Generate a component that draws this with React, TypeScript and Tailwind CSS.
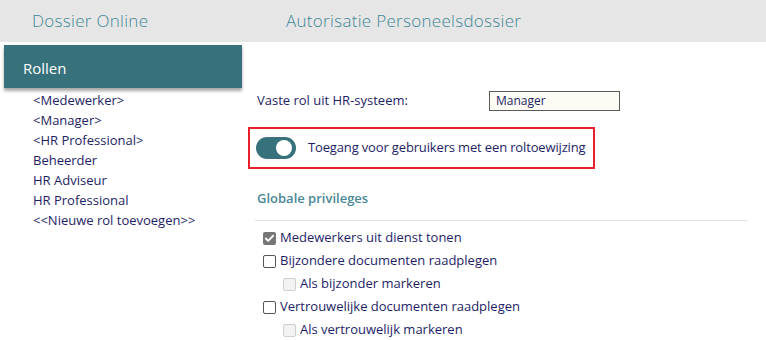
import { Check } from "lucide-react";

const roles = [
  "<Medewerker>",
  "<Manager>",
  "<HR Professional>",
  "Beheerder",
  "HR Adviseur",
  "HR Professional",
  "<<Nieuwe rol toevoegen>>",
];

const privileges = [
  { label: "Medewerkers uit dienst tonen", checked: true, nested: false },
  { label: "Bijzondere documenten raadplegen", checked: false, nested: false },
  { label: "Als bijzonder markeren", checked: false, nested: true },
  { label: "Vertrouwelijke documenten raadplegen", checked: false, nested: false },
  { label: "Als vertrouwelijk markeren", checked: false, nested: true },
];

const Box = ({ checked, disabled }: { checked: boolean; disabled: boolean }) => {
  if (checked) {
    return (
      <span className="flex h-[13px] w-[13px] items-center justify-center rounded-[2px] bg-[#767676]">
        <Check className="h-[11px] w-[11px] text-white" strokeWidth={4} />
      </span>
    );
  }
  return (
    <span
      className={`h-[13px] w-[13px] rounded-[2px] border ${
        disabled ? "border-[#cfcfcf] bg-[#f2f2f2]" : "border-[#555] bg-white"
      }`}
    />
  );
};

export default function App() {
  return (
    <div
      className="h-[340px] w-[766px] overflow-hidden bg-white text-[13px] text-[#1e1e66]"
      style={{ fontFamily: '"Open Sans", "Noto Sans", sans-serif' }}
    >
      {/* Header */}
      <div className="flex h-[42px] items-center bg-[#e6e6e6] text-[17px] font-light tracking-[0.3px] text-[#3e8797]">
        <div className="w-[286px] pl-[32px]">Dossier Online</div>
        <div>Autorisatie Personeelsdossier</div>
      </div>

      <div className="flex pt-[3px]">
        {/* Sidebar */}
        <div className="ml-[4px] w-[238px] shrink-0">
          <div className="flex h-[43px] items-center bg-[#37717b] pl-[19px] pt-[4px] text-[15px] text-white shadow-[0_3px_3px_rgba(0,0,0,0.35)]">
            Rollen
          </div>
          <ul className="mt-[2px] pl-[29px] leading-[20px]">
            {roles.map((r) => (
              <li key={r}>{r}</li>
            ))}
          </ul>
        </div>

        {/* Main */}
        <div className="ml-[6px] flex-1 pr-[18px]">
          <div className="mt-[46px] flex h-[20px] items-center pl-[9px]">
            <span className="w-[232px]">Vaste rol uit HR-systeem:</span>
            <div className="flex h-[20px] w-[131px] items-center border border-[#5a5a5a] bg-[#fcfcf4] pl-[6px] text-[12px] text-[#1e1e66]">
              Manager
            </div>
          </div>

          <div className="mt-[16px] flex h-[42px] w-[347px] items-center gap-[12px] border-2 border-[#e8202c] pl-[6px]">
            <span className="relative h-[22px] w-[40px] rounded-full bg-[#37717b]">
              <span className="absolute right-[4px] top-[3px] h-[16px] w-[16px] rounded-full bg-white" />
            </span>
            <span className="tracking-[-0.15px]">Toegang voor gebruikers met een roltoewijzing</span>
          </div>

          <div className="mt-[20px] pl-[9px] font-semibold text-[#4a8797]">Globale privileges</div>

          <div className="ml-[7px] mt-[11px] border-t border-[#e3e3e3]" />

          <div className="mt-[6px] pl-[15px]">
            {privileges.map((p) => (
              <div
                key={p.label}
                className={`flex h-[23px] items-center gap-[4px] ${p.nested ? "pl-[20px]" : ""}`}
              >
                <Box checked={p.checked} disabled={p.nested} />
                <span>{p.label}</span>
              </div>
            ))}
          </div>
        </div>
      </div>
    </div>
  );
}
